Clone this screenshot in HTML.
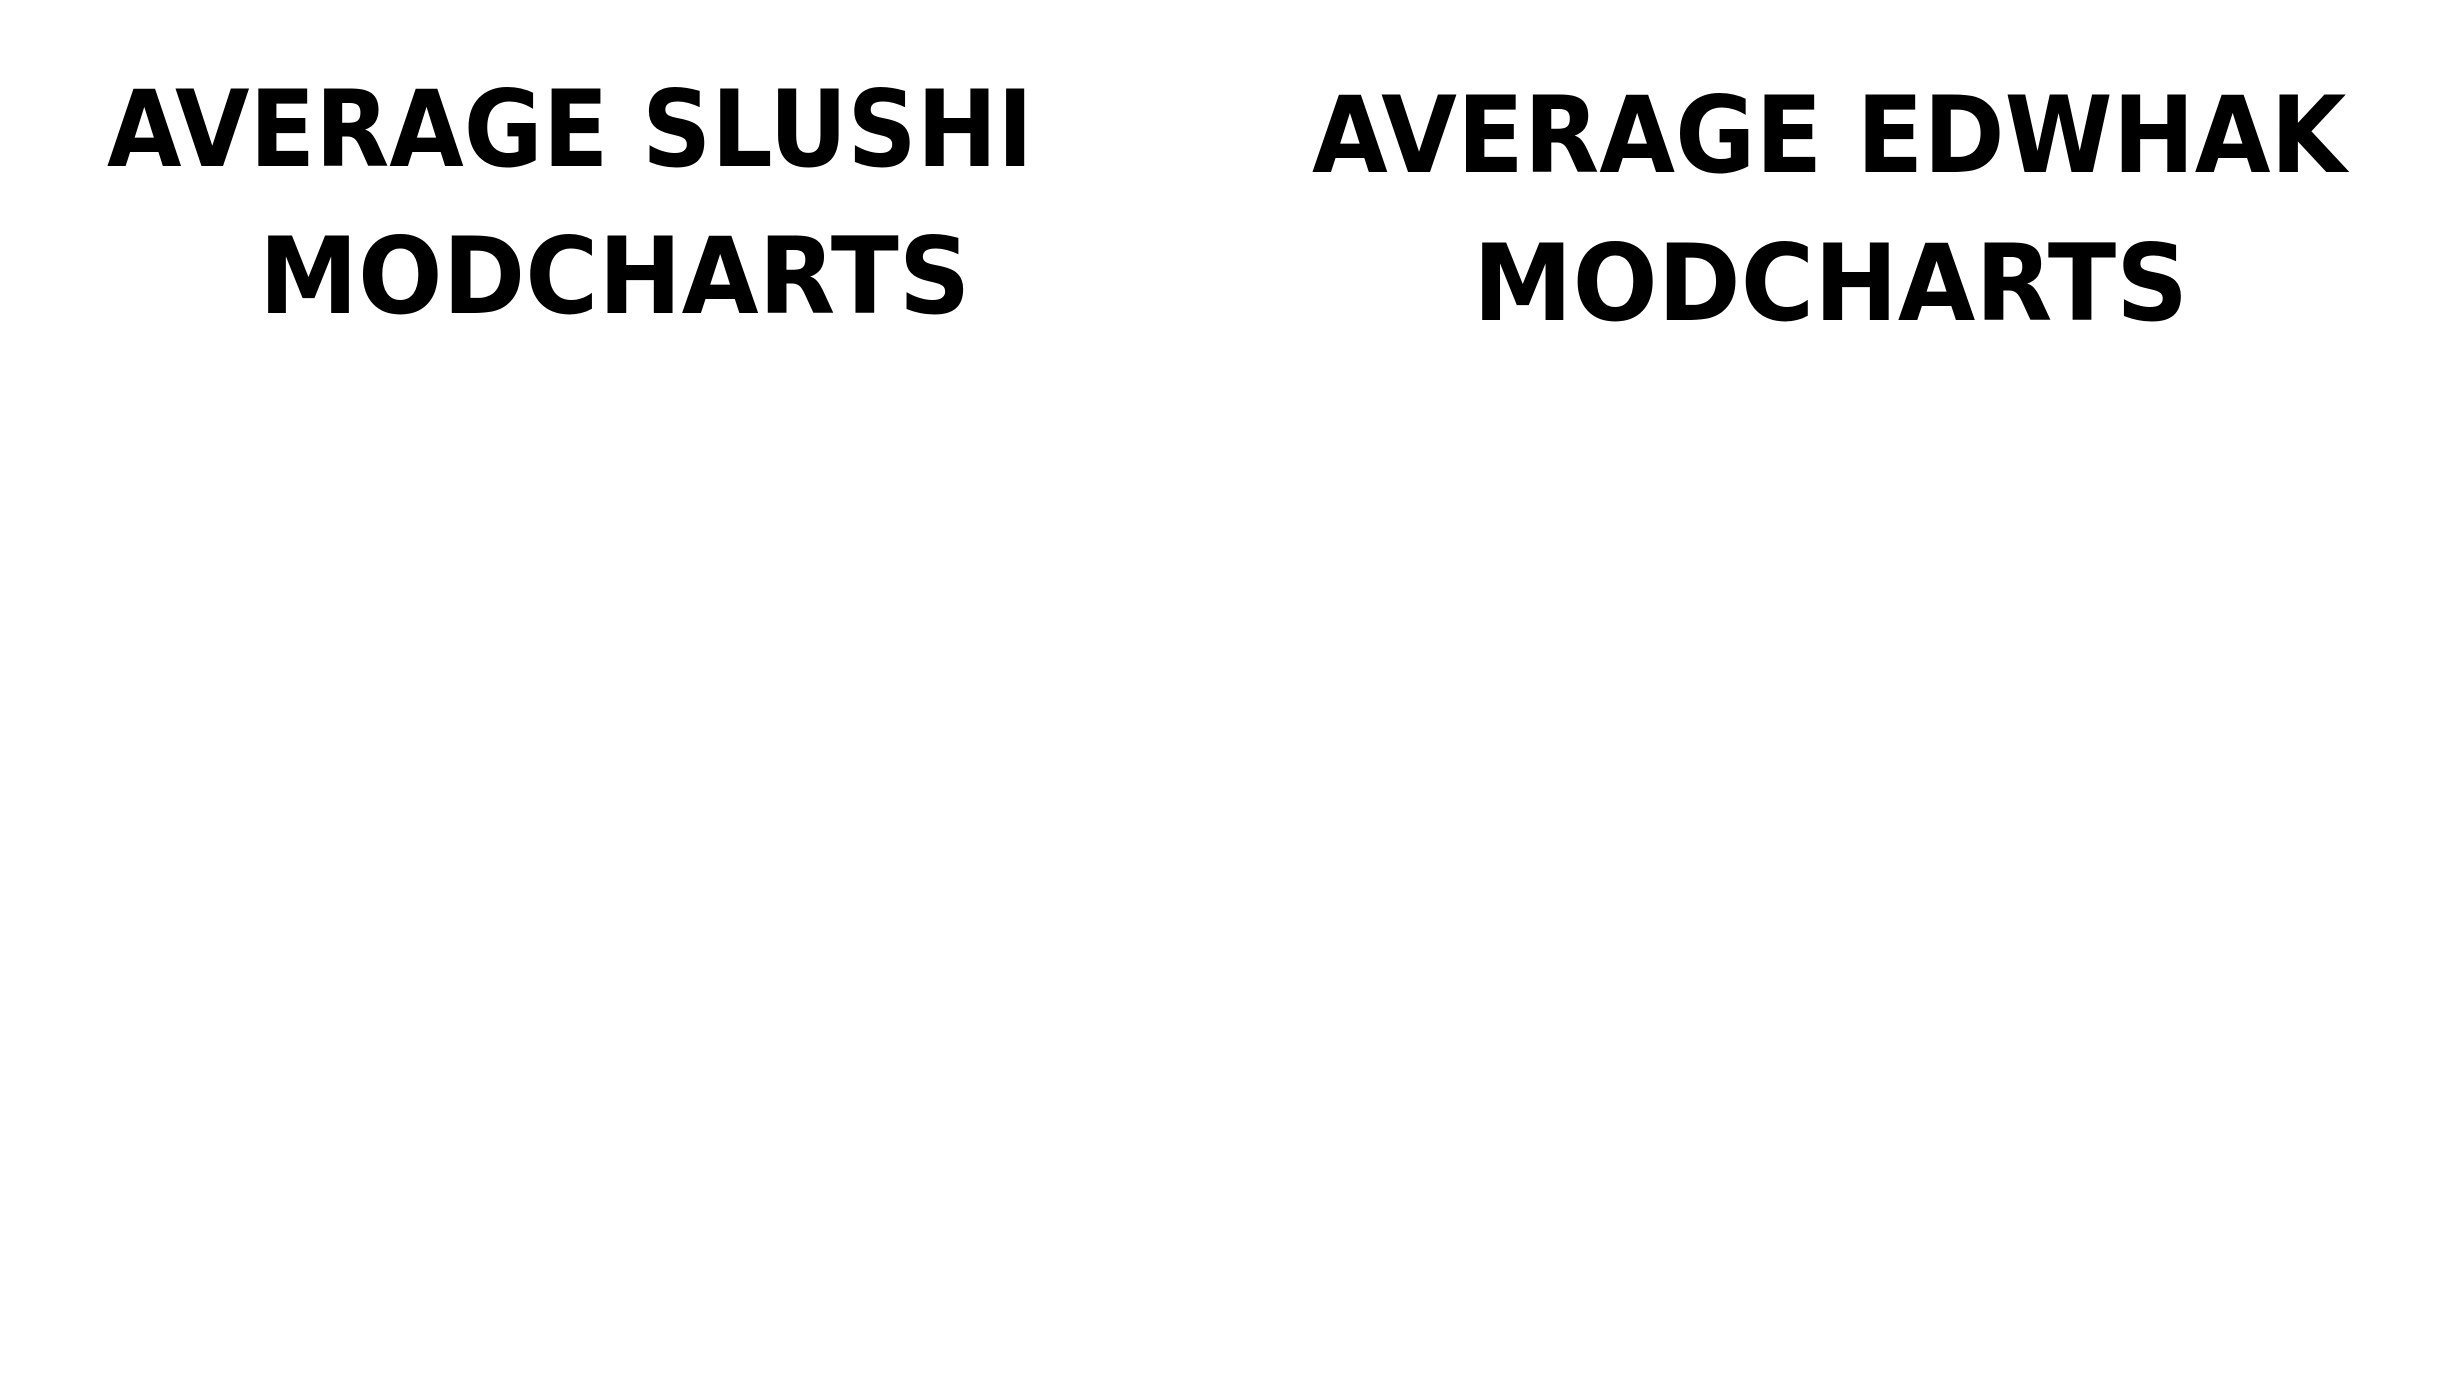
<!DOCTYPE html>
<html><head><style>
html,body{margin:0;padding:0;background:#fff;width:2440px;height:1400px;overflow:hidden;position:relative}
.t{position:absolute;font-family:"DejaVu Sans","Liberation Sans",sans-serif;font-weight:bold;font-size:106px;line-height:1;color:#000;white-space:nowrap;transform-origin:0 0}
</style></head><body>
<div class="t" style="left:107px;top:77px;transform:scaleX(0.908)">AVERAGE SLUSHI</div>
<div class="t" style="left:259px;top:224px;transform:scaleX(0.939)">MODCHARTS</div>
<div class="t" style="left:1312px;top:83px;transform:scaleX(0.924)">AVERAGE EDWHAK</div>
<div class="t" style="left:1473px;top:231px;transform:scaleX(0.944)">MODCHARTS</div>
</body></html>
